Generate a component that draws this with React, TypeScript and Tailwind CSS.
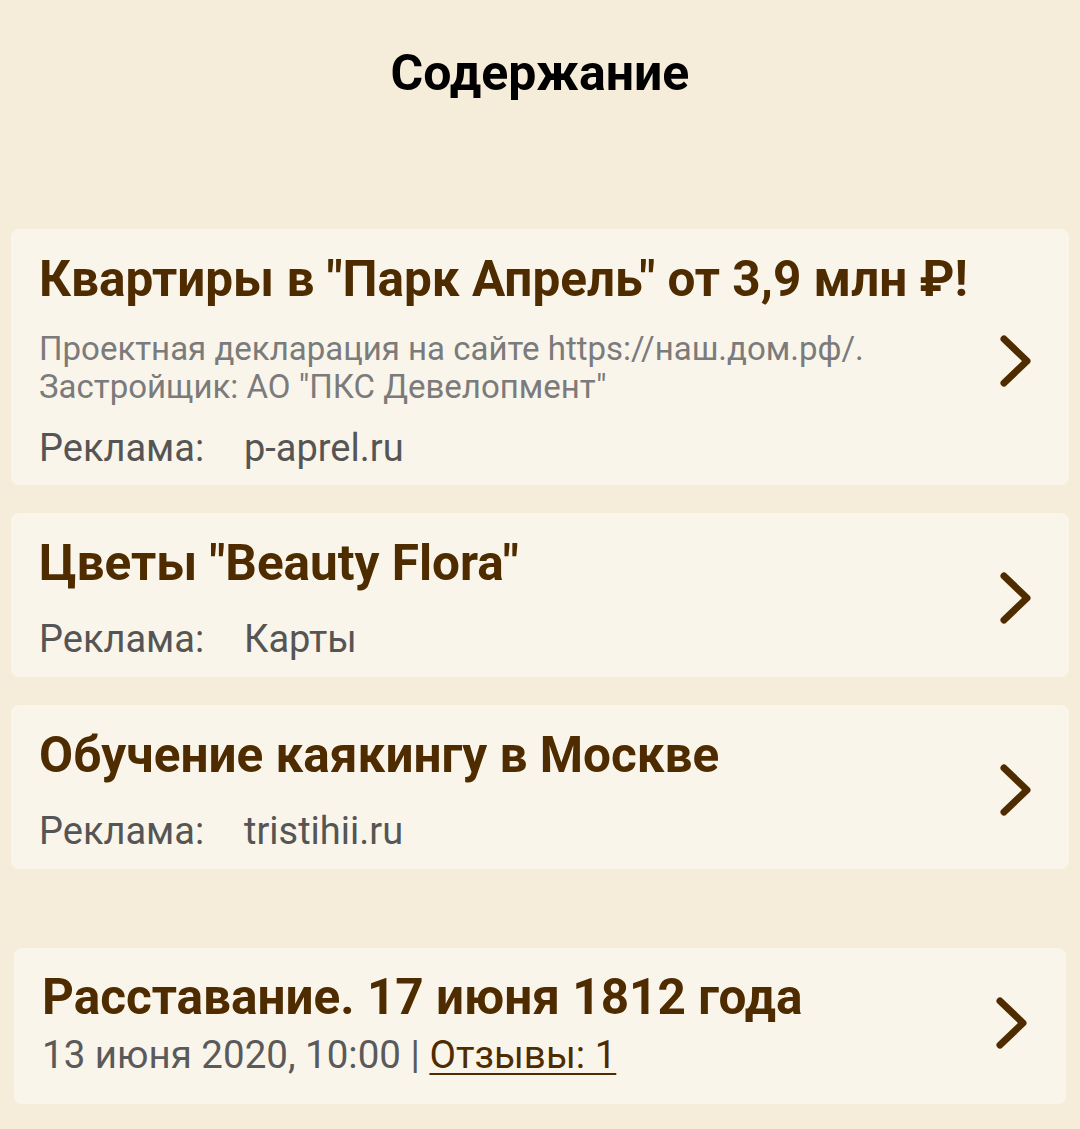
import React from "react";

const Chevron = () => (
  <svg width="32" height="52" viewBox="0 0 32 52" className="shrink-0">
    <polyline
      points="4,4 27,26 4,48"
      fill="none"
      stroke="#4e2c00"
      strokeWidth="7"
      strokeLinecap="round"
      strokeLinejoin="round"
    />
  </svg>
);

type Ad = {
  title: string;
  text?: string[];
  source: string;
};

const ads: Ad[] = [
  {
    title: 'Квартиры в "Парк Апрель" от 3,9 млн ₽!',
    text: [
      "Проектная декларация на сайте https://наш.дом.рф/.",
      'Застройщик: АО "ПКС Девелопмент"',
    ],
    source: "p-aprel.ru",
  },
  { title: 'Цветы "Beauty Flora"', source: "Карты" },
  { title: "Обучение каякингу в Москве", source: "tristihii.ru" },
];

const AdCard = ({ ad }: { ad: Ad }) => {
  return (
    <div
      className={
        ad.text
          ? "mx-[11px] flex items-center rounded-lg bg-[#faf5eb] pl-[28px] pr-[37px] pt-[21px] pb-[14px]"
          : "mx-[11px] flex items-center rounded-lg bg-[#faf5eb] pl-[28px] pr-[37px] pt-[21px] pb-[15px]"
      }
    >
      <div className="min-w-0 flex-1">
        <h2 className="whitespace-nowrap text-[49.5px] leading-[58px] font-bold text-[#4e2c00]">
          {ad.title}
        </h2>
        {ad.text && (
          <p className="mt-[22px] text-[33px] leading-[38px] text-[#7b7b7b]">
            {ad.text[0]}
            <br />
            {ad.text[1]}
          </p>
        )}
        <div
          className={
            ad.text
              ? "mt-[19px] text-[38px] leading-[46px] text-[#555555]"
              : "mt-[24px] text-[38px] leading-[46px] text-[#555555]"
          }
        >
          <span className="inline-block w-[205px]">Реклама:</span>
          <span>{ad.source}</span>
        </div>
      </div>
      <Chevron />
    </div>
  );
};

export default function App() {
  return (
    <div
      className="min-h-[1129px] bg-[#f5ecda] pt-[43px] pb-[26px]"
      style={{ fontFamily: "Roboto, 'Noto Sans', sans-serif" }}
    >
      <h1 className="text-center text-[50px] leading-[60px] font-bold text-black">
        Содержание
      </h1>

      <div className="mt-[126px] flex flex-col gap-[28px]">
        {ads.map((ad) => (
          <AdCard key={ad.title} ad={ad} />
        ))}
      </div>

      <div className="mx-[14px] mt-[79px] flex items-center rounded-lg bg-[#faf5eb] pl-[28px] pr-[38px] pt-[20px] pb-[26px]">
        <div className="min-w-0 flex-1">
          <h2 className="whitespace-nowrap text-[49.5px] leading-[58px] font-bold text-[#4e2c00]">
            Расставание. 17 июня 1812 года
          </h2>
          <div className="mt-[6px] text-[38.5px] leading-[46px] text-[#5a5a5a]">
            13 июня 2020, 10:00 |{" "}
            <a
              href="#"
              className="text-[#4e2c00] underline decoration-2 underline-offset-[5px]"
            >
              Отзывы: 1
            </a>
          </div>
        </div>
        <Chevron />
      </div>
    </div>
  );
}
